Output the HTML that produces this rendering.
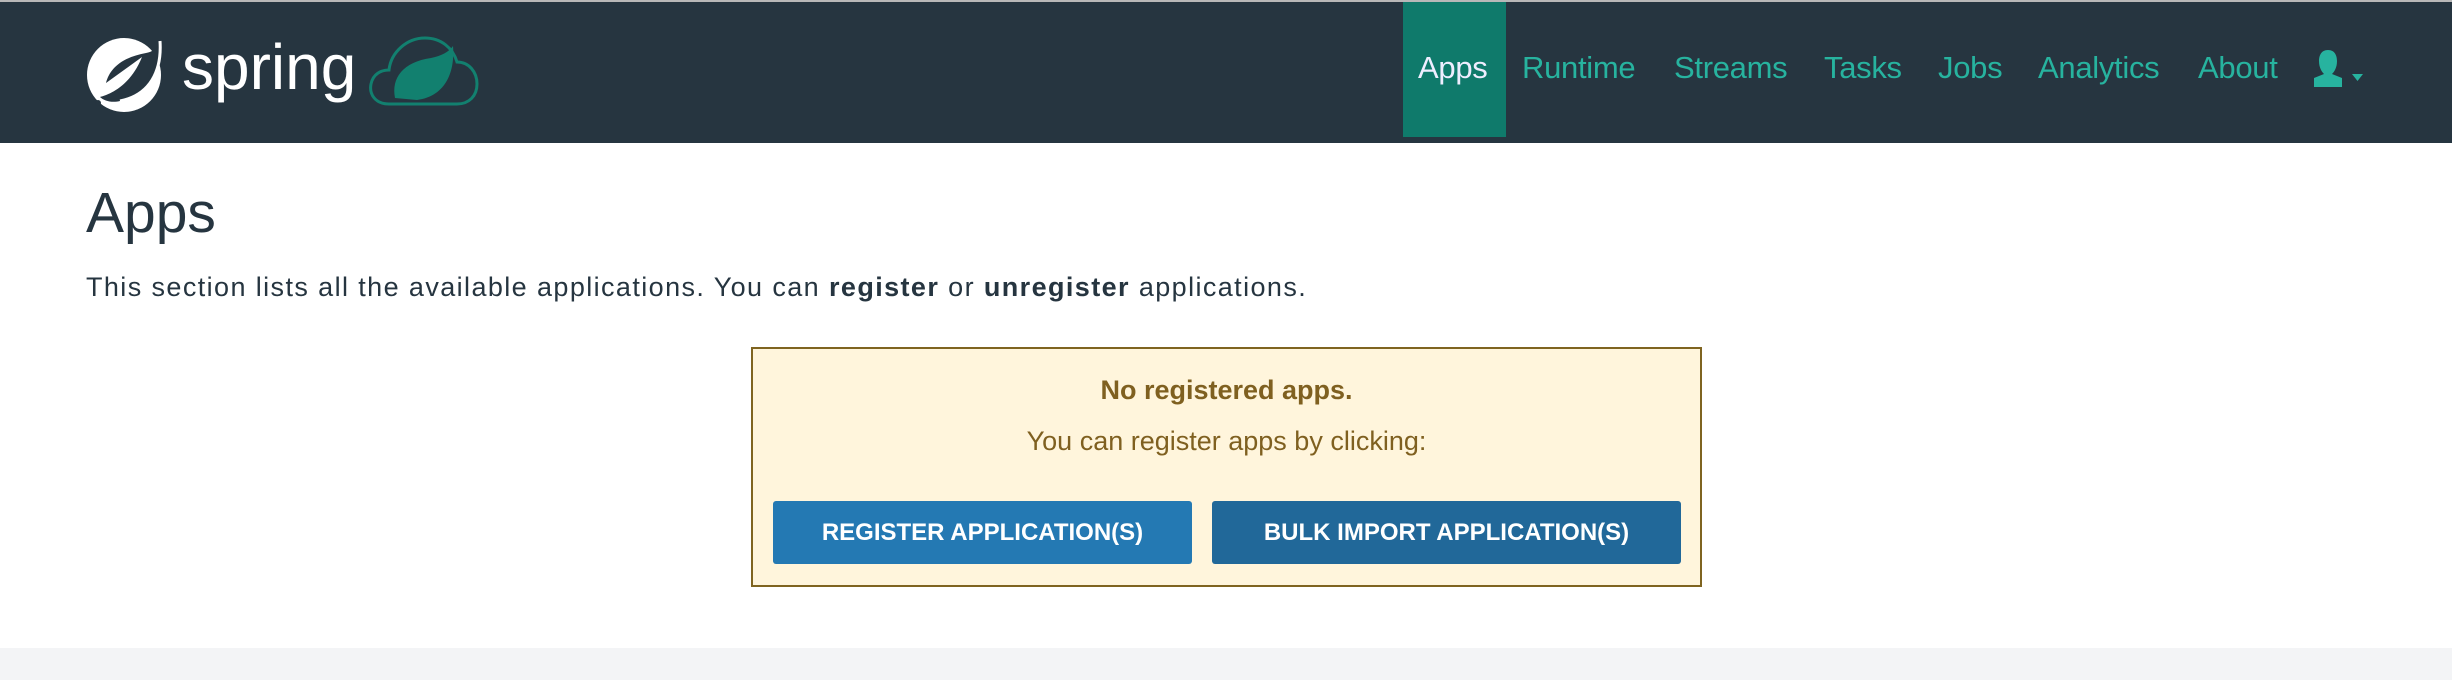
<!DOCTYPE html>
<html><head><meta charset="utf-8"><style>
*{margin:0;padding:0;box-sizing:border-box}
body{width:2452px;height:680px;background:#fff;font-family:"Liberation Sans",sans-serif;position:relative;overflow:hidden}
.top{position:absolute;left:0;top:0;width:2452px;height:2px;background:#b8b8b8}
.nav{position:absolute;left:0;top:2px;width:2452px;height:141px;background:#263540}
.active{position:absolute;left:1403px;top:2px;width:103px;height:135px;background:#0f7a6b}
.nl{position:absolute;top:50px;font-size:31px;color:#27b39f;letter-spacing:-0.3px}
.spring{position:absolute;left:182px;top:30px;font-size:64px;color:#fff;letter-spacing:0px}
h1{position:absolute;left:86px;top:180px;font-size:57px;font-weight:normal;color:#263540}
.p{position:absolute;left:86px;top:272px;font-size:27px;color:#263540;letter-spacing:1.4px}
.box{position:absolute;left:751px;top:347px;width:951px;height:240px;background:#fff5dc;border:2px solid #7f6420;color:#7f6020;text-align:center}
.b{position:absolute;top:152px;height:63px;color:#fff;font-weight:bold;font-size:24px;line-height:63px;border-radius:3px;text-align:center}
.foot{position:absolute;left:0;top:648px;width:2452px;height:32px;background:#f3f4f6}
</style></head><body>
<div class="top"></div>
<div class="nav"></div>
<svg style="position:absolute;left:84px;top:33px" width="84" height="82" viewBox="0 0 84 82">
<circle cx="40" cy="42" r="37" fill="#fff"/>
<path d="M22 50c4-16 18-26 40-30c6-1 10-4 14-10c2 30-10 50-40 58c-8 2-16 0-20-4c8-2 30-10 42-40" fill="#263540"/>
<path d="M76 8c2 30-10 54-40 60" stroke="#fff" stroke-width="3" fill="none"/>
<circle cx="14" cy="70" r="3" fill="#263540"/>
</svg>
<div class="spring">spring</div>
<svg style="position:absolute;left:367px;top:34px" width="112" height="74" viewBox="0 0 112 74">
<path d="M22 70C8 70 2 60 4 50c2-10 10-14 18-14c2-18 18-32 36-32c16 0 28 10 32 24c12 0 20 10 20 22c0 12-8 20-20 20z" fill="none" stroke="#12806f" stroke-width="3"/>
<path d="M28 64c-4-20 8-36 36-40c10-2 18-6 22-12c2 24-6 50-36 54z" fill="#12806f"/>
</svg>
<div class="active"></div>
<div class="nl" style="left:1418px;color:#eef">Apps</div>
<div class="nl" style="left:1522px">Runtime</div>
<div class="nl" style="left:1674px">Streams</div>
<div class="nl" style="left:1824px">Tasks</div>
<div class="nl" style="left:1938px">Jobs</div>
<div class="nl" style="left:2038px">Analytics</div>
<div class="nl" style="left:2198px">About</div>
<svg style="position:absolute;left:2313px;top:50px" width="60" height="38" viewBox="0 0 60 38">
<path d="M15 0c7 0 9 6 9 11c0 7-3 11-5 13l10 4v9H1v-9l10-4c-2-2-5-6-5-13c0-5 2-11 9-11z" fill="#27b39f"/>
<path d="M39 24h11l-5.5 7z" fill="#27b39f"/>
</svg>
<h1>Apps</h1>
<div class="p">This section lists all the available applications. You can <b>register</b> or <b>unregister</b> applications.</div>
<div class="box">
<div style="position:absolute;left:0;right:0;top:26px;font-size:27px;font-weight:bold">No registered apps.</div>
<div style="position:absolute;left:0;right:0;top:77px;font-size:27px">You can register apps by clicking:</div>
<div class="b" style="left:20px;width:419px;background:#2479b3">REGISTER APPLICATION(S)</div>
<div class="b" style="left:459px;width:469px;background:#216899">BULK IMPORT APPLICATION(S)</div>
</div>
<div class="foot"></div>
</body></html>
